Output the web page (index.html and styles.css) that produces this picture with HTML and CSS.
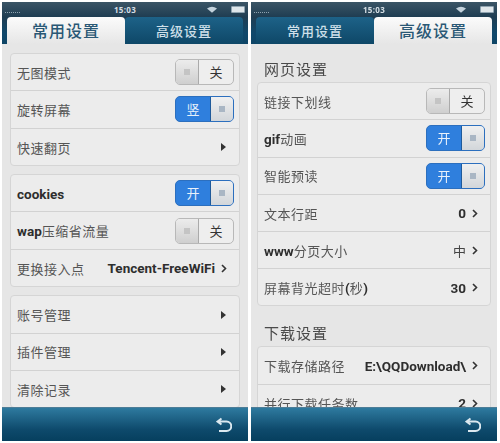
FILE: index.html
```html
<!DOCTYPE html>
<html lang="zh">
<head>
<meta charset="utf-8">
<title>设置</title>
<link rel="stylesheet" href="styles.css">
</head>
<body>
<main class="page">
  <section class="phone">
    <header class="status"><span class="signal"></span><span class="time">15:03</span>
      <svg class="wifi" viewBox="0 0 14 9"><path d="M0 3Q7-2 14 3L7 9Z" fill="#c4d2dc"/></svg>
      <span class="battery"></span></header>
    <nav class="tabs">
      <div class="tab active">常用设置</div>
      <div class="tab">高级设置</div>
    </nav>
    <div class="content first">
      <div class="group">
        <div class="row"><span class="label">无图模式</span><span class="toggle off"><span class="knob"><i></i></span><span class="state">关</span></span></div>
        <div class="row"><span class="label">旋转屏幕</span><span class="toggle on"><span class="state">竖</span><span class="knob"><i></i></span></span></div>
        <div class="row"><span class="label">快速翻页</span><span class="tri"></span></div>
      </div>
      <div class="group">
        <div class="row"><span class="label"><b>cookies</b></span><span class="toggle on"><span class="state">开</span><span class="knob"><i></i></span></span></div>
        <div class="row"><span class="label"><b>wap</b>压缩省流量</span><span class="toggle off"><span class="knob"><i></i></span><span class="state">关</span></span></div>
        <div class="row"><span class="label">更换接入点</span><span class="value"><b>Tencent-FreeWiFi</b><svg class="chev" viewBox="0 0 6 9"><path d="M1 1l3.500 3.500L1 8"/></svg></span></div>
      </div>
      <div class="group">
        <div class="row"><span class="label">账号管理</span><span class="tri"></span></div>
        <div class="row"><span class="label">插件管理</span><span class="tri"></span></div>
        <div class="row"><span class="label">清除记录</span><span class="tri"></span></div>
      </div>
    </div>
    <footer class="bar"><svg class="back" viewBox="0 0 16 16"><path d="M5.500 1.500L1.500 4.500 5.500 7.500M2 4.500h8.500a4.500 4.500 0 0 1 0 9.500H3"/></svg></footer>
  </section>

  <section class="phone">
    <header class="status"><span class="signal"></span><span class="time">15:03</span>
      <svg class="wifi" viewBox="0 0 14 9"><path d="M0 3Q7-2 14 3L7 9Z" fill="#c4d2dc"/></svg>
      <span class="battery"></span></header>
    <nav class="tabs">
      <div class="tab">常用设置</div>
      <div class="tab active">高级设置</div>
    </nav>
    <div class="content second">
      <h2 class="title">网页设置</h2>
      <div class="group">
        <div class="row"><span class="label">链接下划线</span><span class="toggle off"><span class="knob"><i></i></span><span class="state">关</span></span></div>
        <div class="row"><span class="label"><b>gif</b>动画</span><span class="toggle on"><span class="state">开</span><span class="knob"><i></i></span></span></div>
        <div class="row"><span class="label">智能预读</span><span class="toggle on"><span class="state">开</span><span class="knob"><i></i></span></span></div>
        <div class="row"><span class="label">文本行距</span><span class="value"><b>0</b><svg class="chev" viewBox="0 0 6 9"><path d="M1 1l3.500 3.500L1 8"/></svg></span></div>
        <div class="row"><span class="label"><b>www</b>分页大小</span><span class="value"><span class="plain">中</span><svg class="chev" viewBox="0 0 6 9"><path d="M1 1l3.500 3.500L1 8"/></svg></span></div>
        <div class="row"><span class="label">屏幕背光超时<b>(</b>秒<b>)</b></span><span class="value"><b>30</b><svg class="chev" viewBox="0 0 6 9"><path d="M1 1l3.500 3.500L1 8"/></svg></span></div>
      </div>
      <h2 class="title">下载设置</h2>
      <div class="group">
        <div class="row"><span class="label">下载存储路径</span><span class="value"><b>E:\QQDownload\</b><svg class="chev" viewBox="0 0 6 9"><path d="M1 1l3.500 3.500L1 8"/></svg></span></div>
        <div class="row"><span class="label">并行下载任务数</span><span class="value"><b>2</b><svg class="chev" viewBox="0 0 6 9"><path d="M1 1l3.500 3.500L1 8"/></svg></span></div>
      </div>
    </div>
    <footer class="bar"><svg class="back" viewBox="0 0 16 16"><path d="M5.500 1.500L1.500 4.500 5.500 7.500M2 4.500h8.500a4.500 4.500 0 0 1 0 9.500H3"/></svg></footer>
  </section>
</main>
</body>
</html>
```

FILE: styles.css
```css
* { box-sizing: border-box; }
html, body { margin: 0; height: 100%; background: #fff; }
body { font-family: "Noto Sans CJK SC", "Roboto", sans-serif; color: #4a4a4a; overflow: hidden; }
.page { display: flex; gap: 3px; padding: 2px; height: 443px; filter: blur(0.5px); }
.phone { width: 246px; height: 439px; display: flex; flex-direction: column; background: #e6e6e6; overflow: hidden; }
.status { height: 15px; flex: none; display: flex; align-items: center; position: relative; background: linear-gradient(#3b5566, #1f3d52); color: #d5dee4; }
.signal { position: absolute; left: 3px; top: 10px; width: 15px; border-top: 1px dotted #8fa3b0; }
.time { position: absolute; left: 112px; top: 0; font: bold 8px/15px "Open Sans", sans-serif; letter-spacing: .3px; }
.wifi { position: absolute; left: 205px; top: 4px; width: 10px; height: 7px; }
.battery { position: absolute; left: 229px; top: 4px; width: 14px; height: 7px; background: #dfe6ea; border: 1px solid #8fa3b0; border-radius: 1px; }
.tabs { height: 27px; flex: none; display: flex; padding: 0 5px; background: linear-gradient(#1f3d52, #10486b 60%, #0e4566); }
.tab { width: 118px; border-radius: 4px 4px 0 0; text-align: center; font-size: 13px; line-height: 27px; font-weight: 500; letter-spacing: 1px; color: #cfe0ea; background: linear-gradient(#1d6288, #0e4767); }
.tab.active { font-size: 16px; color: #2a5875; background: linear-gradient(#fbfbfb, #e6e6e6); }
.content { flex: 1; min-height: 0; overflow: hidden; padding: 9px 8px 0; }
.content.second { padding: 0 6px; }
.title { margin: 0; height: 38px; padding: 15px 0 0 7px; font-size: 15px; line-height: 20px; font-weight: 400; letter-spacing: 1px; color: #4a4a4a; }
.group + .title { height: 40px; padding-top: 17px; }
.content.second .group { margin-bottom: 0; }
.group { background: #ececec; border: 1px solid #d5d5d5; border-radius: 4px; margin-bottom: 8.6px; }
.row { height: 37.3px; display: flex; align-items: center; justify-content: space-between; padding: 0 5px 0 6px; border-bottom: 1px solid #d2d2d2; }
.row:last-child { border-bottom: 0; height: 36px; padding-top: 1px; }
.label { font-size: 13px; letter-spacing: .5px; color: #555; white-space: nowrap; }
b { font-family: "Roboto", "Noto Sans CJK SC", sans-serif; font-weight: 700; color: #2e2e2e; font-size: 13.5px; letter-spacing: 0; }
.plain { font-size: 13px; color: #444; }
.toggle { width: 59px; height: 26px; display: flex; border-radius: 5px; overflow: hidden; border: 1px solid #b8b8b8; flex: none; font-size: 13px; }
.toggle .state { flex: 1; text-align: center; line-height: 24px; }
.toggle.off { background: #eeeeee; color: #333; }
.toggle.on { background: #2f7fdd; color: #e8f1fb; border-color: #2c6fbe; }
.knob { width: 23px; display: flex; align-items: center; justify-content: center; background: linear-gradient(#ececec, #cfcfcf); border-right: 1px solid #aaa; }
.on .knob { border-right: 0; border-left: 1px solid #1f5a9a; background: linear-gradient(#f0f0f0, #d2d6da); }
.knob i { display: block; width: 6px; height: 6px; background: #c4c4c4; }
.on .knob i { background: #a9b6c4; }
.tri { width: 0; height: 0; border-left: 5px solid #333; border-top: 4.5px solid transparent; border-bottom: 4.5px solid transparent; margin-right: 8px; }
.value { display: flex; align-items: center; gap: 6px; margin-right: 7px; white-space: nowrap; }
.chev { width: 6px; height: 9px; fill: none; stroke: #333; stroke-width: 1.600; }
.bar { height: 34px; flex: none; display: flex; align-items: center; justify-content: flex-end; padding-right: 16px; position: relative; z-index: 1; background: linear-gradient(#2e7a9f, #0e4a6c 65%, #063f5e); border-top: 1px solid #4d7d97; }
.back { width: 16px; height: 16px; fill: none; stroke: #dbe8ef; stroke-width: 2; }
```
